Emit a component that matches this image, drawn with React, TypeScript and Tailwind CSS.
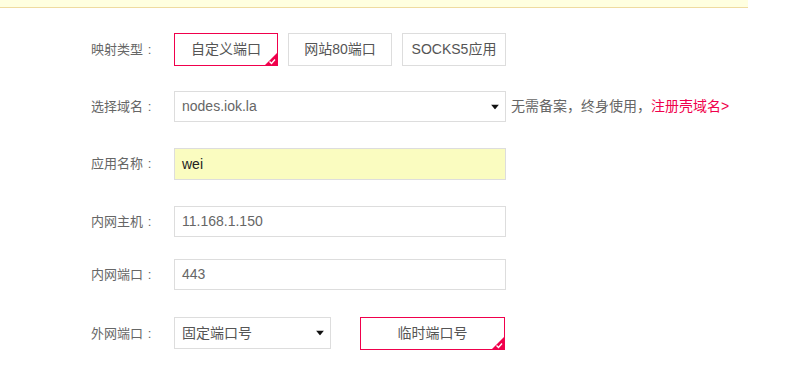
import React from "react";

const CN = { fontFamily: '"Liberation Sans", "Noto Sans CJK SC", Arial, sans-serif' };

// fullwidth punctuation kept at a full em box
function P({ c }: { c: string }) {
  return (
    <span className={`inline-block w-[1em] ${c === "：" ? "text-center" : "text-left"}`}>
      {c === "：" ? ":" : c}
    </span>
  );
}

function Corner() {
  return (
    <svg className="absolute right-0 bottom-0" width="12" height="12" viewBox="0 0 12 12">
      <polygon points="12,0 12,12 0,12" fill="#f0004c" />
      <polyline points="4.5,8.5 6.5,10.5 10,6.5" fill="none" stroke="#fff" strokeWidth="1.4" />
    </svg>
  );
}

function Caret() {
  return (
    <svg className="absolute right-[6px] top-1/2 -translate-y-1/2" width="8" height="5" viewBox="0 0 8 5">
      <polygon points="0,0 8,0 4,5" fill="#111" />
    </svg>
  );
}

function Label({ text }: { text: string }) {
  return (
    <div className="w-[83px] shrink-0 text-[13px] text-[#666]">
      {text}
      <P c="：" />
    </div>
  );
}

function Choice({ text, active, w = "w-[104px]" }: { text: string; active?: boolean; w?: string }) {
  return (
    <div
      className={`relative ${w} h-[33px] flex items-center justify-center text-[14px] text-[#555] border ${
        active ? "border-[#f0004c]" : "border-[#ddd]"
      }`}
    >
      {text}
      {active && <Corner />}
    </div>
  );
}

function Field({ value, yellow, dark }: { value: string; yellow?: boolean; dark?: boolean }) {
  return (
    <div
      className={`w-[332px] h-full flex items-center pl-[7px] text-[14px] border border-[#ddd] ${
        yellow ? "bg-[#fafcc0]" : "bg-white"
      } ${dark ? "text-[#222]" : "text-[#666]"}`}
    >
      {value}
    </div>
  );
}

export default function App() {
  return (
    <div className="w-[787px] h-[370px] bg-white relative overflow-hidden" style={CN} lang="zh-CN">
      {/* notice strip */}
      <div className="w-[748px] h-[8px] bg-[#ffffe0] border-b border-[#efdba0]" />

      <div className="pl-[91px]">
        {/* 映射类型 */}
        <div className="flex items-center mt-[25px] h-[33px]">
          <Label text="映射类型" />
          <div className="flex gap-[10px]">
            <Choice text="自定义端口" active />
            <Choice text="网站80端口" />
            <Choice text="SOCKS5应用" />
          </div>
        </div>

        {/* 选择域名 */}
        <div className="flex items-center mt-[25px] h-[31px]">
          <Label text="选择域名" />
          <div className="relative w-[332px] h-full flex items-center pl-[7px] text-[14px] text-[#666] border border-[#ddd]">
            nodes.iok.la
            <Caret />
          </div>
          <span className="ml-[5px] text-[14px] text-[#666]">
            无需备案<P c="，" />终身使用<P c="，" />
            <span className="text-[#f0004c]">注册壳域名&gt;</span>
          </span>
        </div>

        {/* 应用名称 */}
        <div className="flex items-center mt-[26px] h-[32px]">
          <Label text="应用名称" />
          <Field value="wei" yellow dark />
        </div>

        {/* 内网主机 */}
        <div className="flex items-center mt-[26px] h-[31px]">
          <Label text="内网主机" />
          <Field value="11.168.1.150" />
        </div>

        {/* 内网端口 */}
        <div className="flex items-center mt-[22px] h-[31px]">
          <Label text="内网端口" />
          <Field value="443" />
        </div>

        {/* 外网端口 */}
        <div className="flex items-center mt-[27px] h-[33px]">
          <Label text="外网端口" />
          <div className="relative w-[157px] h-[32px] self-start flex items-center pl-[7px] text-[14px] text-[#555] border border-[#ddd]">
            固定端口号
            <Caret />
          </div>
          <div className="ml-[29px]">
            <Choice text="临时端口号" active w="w-[145px]" />
          </div>
        </div>
      </div>
    </div>
  );
}
